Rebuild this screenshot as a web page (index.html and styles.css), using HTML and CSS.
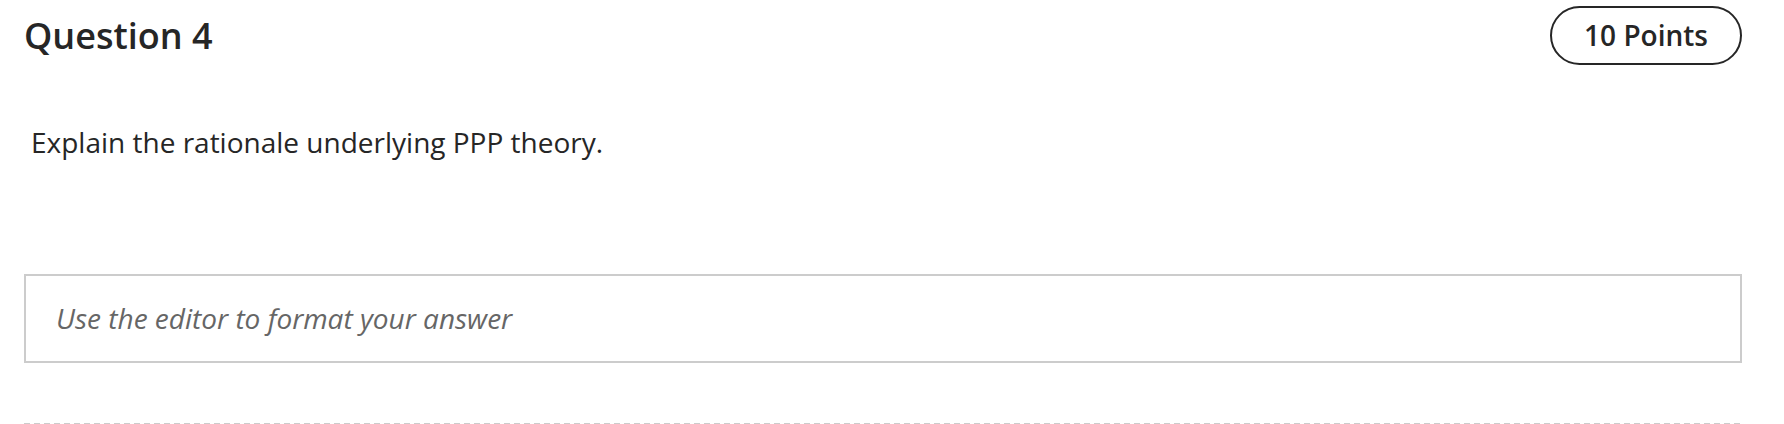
FILE: index.html
```html
<!DOCTYPE html>
<html lang="en">
<head>
<meta charset="utf-8">
<title>Question 4</title>
<link rel="stylesheet" href="styles.css">
</head>
<body>
<section class="question">
  <header class="question-header">
    <h2 class="question-title">Question 4</h2>
    <span class="points-badge">10 Points</span>
  </header>
  <p class="question-text">Explain the rationale underlying PPP theory.</p>
  <div class="answer-editor">
    <span class="placeholder">Use the editor to format your answer</span>
  </div>
  <div class="divider"></div>
</section>
</body>
</html>
```

FILE: styles.css
```css
html, body {
  margin: 0;
  padding: 0;
  background: #ffffff;
}

body {
  font-family: "Open Sans", "Noto Sans", sans-serif;
  color: #262626;
}

.question {
  width: 1718px;
  margin-left: 24px;
  padding-top: 6px;
}

.question-header {
  display: flex;
  align-items: center;
  justify-content: space-between;
}

.question-title {
  margin: 0;
  font-size: 36px;
  font-weight: 600;
  line-height: 59px;
  color: #262626;
}

.points-badge {
  box-sizing: border-box;
  height: 59px;
  padding: 0 32px;
  border: 2px solid #262626;
  border-radius: 30px;
  font-size: 28px;
  font-weight: 600;
  line-height: 55px;
  color: #262626;
}

.question-text {
  margin: 56px 0 0;
  padding-left: 7px;
  font-size: 28px;
  font-weight: 400;
  line-height: 42px;
  color: #262626;
}

.answer-editor {
  margin-top: 111px;
  box-sizing: border-box;
  height: 89px;
  padding: 20px 30px;
  border: 2px solid #cccccc;
}

.placeholder {
  font-size: 28px;
  font-style: italic;
  line-height: 45px;
  color: #666666;
}

.divider {
  margin-top: 60px;
  height: 1px;
  background: repeating-linear-gradient(to right, #cccccc 0 6px, transparent 6px 10px);
}
```
